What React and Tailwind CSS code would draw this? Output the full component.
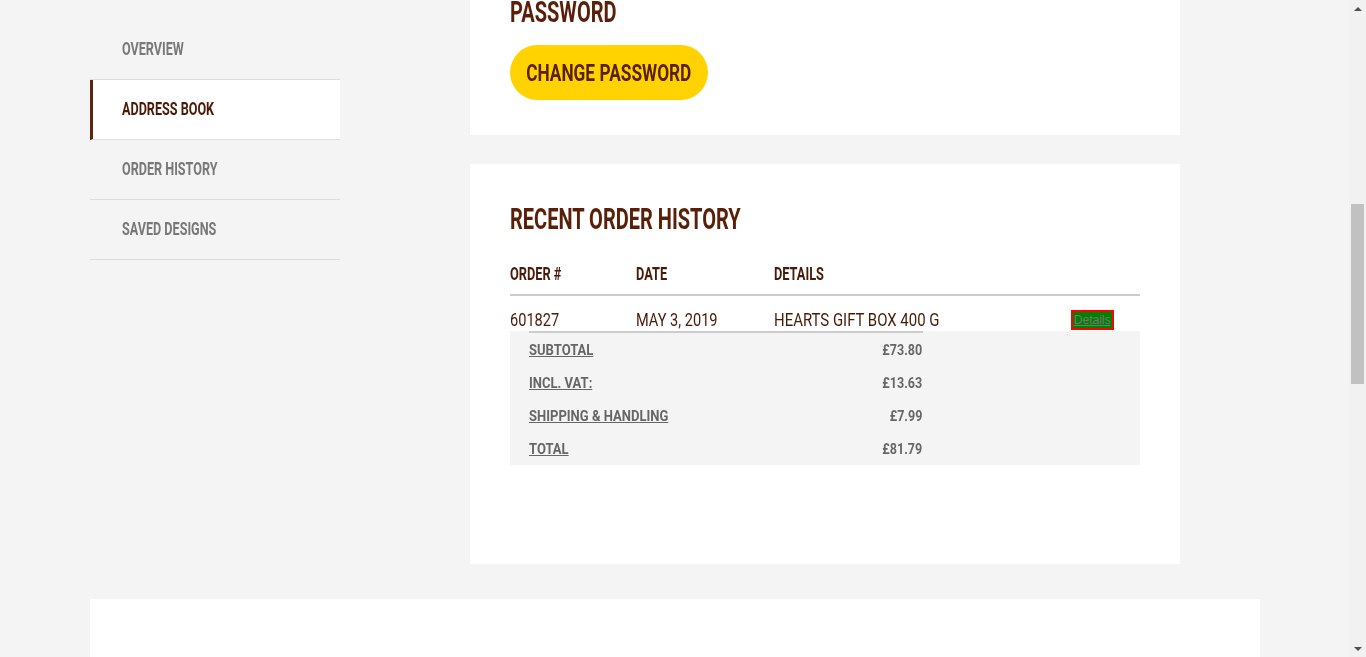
import React, { useLayoutEffect, useRef } from 'react';

// DIN-like condensed look: Roboto squeezed horizontally
const Cond = ({ s, o = 'origin-left', children }) => (
  <span className={`inline-block whitespace-nowrap ${o} ${s}`}>{children}</span>
);

const navItems = [
  { label: 'OVERVIEW', active: false },
  { label: 'ADDRESS BOOK', active: true },
  { label: 'ORDER HISTORY', active: false },
  { label: 'SAVED DESIGNS', active: false },
];

const totals = [
  { label: 'SUBTOTAL', value: '£73.80' },
  { label: 'INCL. VAT:', value: '£13.63' },
  { label: 'SHIPPING & HANDLING', value: '£7.99' },
  { label: 'TOTAL', value: '£81.79' },
];

const App = () => {
  const scrollRef = useRef(null);
  const ordersRef = useRef(null);

  // the screenshot is taken part way down the account page
  useLayoutEffect(() => {
    if (scrollRef.current && ordersRef.current) {
      scrollRef.current.scrollTop = ordersRef.current.offsetTop - 164;
    }
  }, []);

  return (
    <div className="flex h-screen bg-[#f4f4f4] font-['Roboto',sans-serif]">
      <div ref={scrollRef} className="relative flex-1 overflow-y-scroll [scrollbar-width:none]">
        <div className="max-w-[1170px] mx-auto">
          {/* Page title */}
          <div className="pt-[60px] pb-[40px]">
            <h1 className="text-[40px] font-bold text-[#5a1f08] leading-[44px]">
              <Cond s="scale-x-[0.7]">MY ACCOUNT</Cond>
            </h1>
          </div>

          <div className="flex items-start">
            {/* Sidebar */}
            <nav className="sticky top-[20px] self-start w-[250px] shrink-0">
              {navItems.map((item) => (
                <div
                  key={item.label}
                  className={
                    item.active
                      ? 'h-[60px] pb-[2px] flex items-center bg-white border-l-[3px] border-l-[#5e2410] pl-[29px] border-b border-b-[#dddddd] text-[18px] font-bold text-[#4a1a08]'
                      : 'h-[60px] pb-[2px] flex items-center pl-8 border-b border-[#dddddd] text-[18px] font-bold text-[#787878]'
                  }
                >
                  <Cond s="scale-x-[0.7]">{item.label}</Cond>
                </div>
              ))}
            </nav>

            {/* Main column */}
            <div className="ml-[130px] w-[710px]">
              <div className="bg-white px-10 pt-[40px] pb-[35px]">
                <h2 className="text-[29px] font-bold text-[#5a1f08] leading-[30px]">
                  <Cond s="scale-x-[0.69]">PERSONAL DETAILS</Cond>
                </h2>
                <div className="mt-6 grid grid-cols-2 gap-6 text-[16px] text-[#4a1a08]">
                  <div>
                    <p className="text-[13px] font-bold text-[#777]">FIRST NAME</p>
                    <p className="mt-1">Emma</p>
                  </div>
                  <div>
                    <p className="text-[13px] font-bold text-[#777]">LAST NAME</p>
                    <p className="mt-1">Thompson</p>
                  </div>
                  <div>
                    <p className="text-[13px] font-bold text-[#777]">EMAIL</p>
                    <p className="mt-1">emma.thompson@example.com</p>
                  </div>
                  <div>
                    <p className="text-[13px] font-bold text-[#777]">PHONE</p>
                    <p className="mt-1">07700 900123</p>
                  </div>
                </div>
                <button className="mt-8 h-[55px] w-[160px] flex items-center justify-center rounded-full bg-[#ffd200] text-[24px] font-bold text-[#5a1f08]">
                  <Cond s="scale-x-[0.72]" o="origin-center">EDIT DETAILS</Cond>
                </button>

                <h2 className="mt-[60px] text-[29px] font-bold text-[#5a1f08] leading-[30px]">
                  <Cond s="scale-x-[0.69]">NEWSLETTER</Cond>
                </h2>
                <p className="mt-4 text-[16px] text-[#4a1a08]">You are subscribed to our newsletter.</p>

                <h2 className="mt-[60px] text-[29px] font-bold text-[#5a1f08] leading-[30px]">
                  <Cond s="scale-x-[0.69]">PASSWORD</Cond>
                </h2>
                <button className="mt-[18px] h-[55px] w-[198px] flex items-center justify-center rounded-full bg-[#ffd200] text-[24px] font-bold text-[#5a1f08]">
                  <Cond s="scale-x-[0.72]" o="origin-center">CHANGE PASSWORD</Cond>
                </button>
              </div>

              {/* Recent order history */}
              <div ref={ordersRef} className="mt-[29px] h-[400px] bg-white px-10 pt-[40px]">
                <h2 className="text-[29px] font-bold text-[#5a1f08] leading-[30px]">
                  <Cond s="scale-x-[0.69]">RECENT ORDER HISTORY</Cond>
                </h2>

                <div className="mt-[30px] grid grid-cols-[126px_138px_1fr_auto] pb-[10px] border-b-2 border-[#cccccc] text-[18px] font-bold text-[#4a1a08] leading-[20px]">
                  <Cond s="scale-x-[0.71]">ORDER #</Cond>
                  <Cond s="scale-x-[0.71]">DATE</Cond>
                  <Cond s="scale-x-[0.71]">DETAILS</Cond>
                  <span />
                </div>

                <div className="mt-[14px] mb-px grid grid-cols-[126px_138px_1fr_auto] items-center text-[18px] text-[#4a1a08] leading-[20px]">
                  <Cond s="scale-x-[0.81]">601827</Cond>
                  <Cond s="scale-x-[0.81]">MAY 3, 2019</Cond>
                  <Cond s="scale-x-[0.83]">HEARTS GIFT BOX 400 G</Cond>
                  <a
                    href="#"
                    className="mr-[26px] h-[20px] px-[1px] flex items-center border-2 border-[#ff0000] bg-[#008000] font-['Liberation_Sans',sans-serif] text-[12px] text-[#777777] underline leading-none"
                  >
                    Details
                  </a>
                </div>

                <div className="bg-[#f4f4f4] px-[19px]">
                  <div className="w-[394px] border-t-2 border-[#cccccc]">
                    {totals.map((row) => (
                      <div key={row.label} className="h-[33px] pt-[2px] flex items-center justify-between text-[15.5px] font-bold text-[#666666]">
                        <Cond s="scale-x-[0.84]">
                          <span className="underline">{row.label}</span>
                        </Cond>
                        <Cond s="scale-x-[0.81]" o="origin-right">{row.value}</Cond>
                      </div>
                    ))}
                  </div>
                </div>
              </div>
            </div>
          </div>

          {/* Lower section */}
          <div className="mt-[35px] h-[900px] bg-white px-10 pt-[80px]">
            <h2 className="text-[29px] font-bold text-[#5a1f08] leading-[30px]">
              <Cond s="scale-x-[0.69]">SAVED DESIGNS</Cond>
            </h2>
            <p className="mt-4 text-[16px] text-[#777]">You have no saved designs yet.</p>
          </div>
          <div className="h-[90px]" />
        </div>
      </div>

      {/* Scrollbar */}
      <div className="w-[17px] shrink-0 flex flex-col bg-[#f1f1f1]">
        <div className="h-[17px] flex items-center justify-center">
          <svg width="8" height="4" viewBox="0 0 8 4">
            <path d="M0 4 L4 0 L8 4 Z" fill="#505050" />
          </svg>
        </div>
        <div className="flex-1 px-[2px]">
          <div className="mt-[187px] h-[180px] bg-[#c1c1c1]" />
        </div>
        <div className="h-[17px] flex items-center justify-center">
          <svg width="8" height="4" viewBox="0 0 8 4">
            <path d="M0 0 L8 0 L4 4 Z" fill="#505050" />
          </svg>
        </div>
      </div>
    </div>
  );
};

export default App;
